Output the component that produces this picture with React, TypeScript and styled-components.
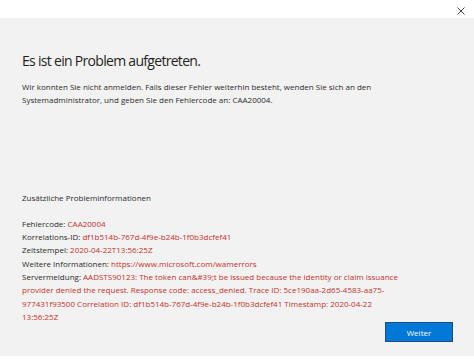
import React from 'react';
import styled, { createGlobalStyle } from 'styled-components';

const Global = createGlobalStyle`
  html, body {
    margin: 0;
    padding: 0;
    background: #ffffff;
  }
  body {
    font-family: 'Open Sans', 'Noto Sans', 'Liberation Sans', sans-serif;
    color: #2b2b2b;
  }
`;

const Window = styled.div`
  width: 474px;
  height: 361px;
  display: flex;
  flex-direction: column;
  background: #ffffff;
`;

const TitleBar = styled.div`
  height: 18px;
  display: flex;
  justify-content: flex-end;
  align-items: center;
  padding-right: 8px;
  background: #ffffff;
`;

const CloseButton = styled.button`
  border: none;
  background: transparent;
  padding: 0;
  width: 10px;
  height: 10px;
  display: flex;
  align-items: center;
  justify-content: center;
  margin-top: 4px;
`;

const Panel = styled.div`
  height: 338px;
  background: #f2f2f2;
  display: flex;
  flex-direction: column;
  padding: 0 21px 0 22px;
  box-sizing: border-box;
`;

const Heading = styled.h1`
  margin: 33px 0 0;
  font-size: 14px;
  letter-spacing: -0.7px;
  font-weight: 400;
  line-height: 20px;
  color: #1f1f1f;
`;

const Text = styled.p<{ top?: number }>`
  margin: ${(p) => p.top || 0}px 0 0;
  font-size: 8px;
  line-height: 13.3px;
  color: #2b2b2b;
  max-width: 382px;
`;

const Value = styled.span`
  color: #c4312b;
`;

const Footer = styled.div`
  margin-top: -1px;
  display: flex;
  justify-content: flex-end;
`;

const Button = styled.button`
  width: 68px;
  height: 20px;
  background: #0078d7;
  border: 1px solid #1a4f86;
  color: #ffffff;
  font-family: 'Open Sans', 'Noto Sans', sans-serif;
  font-size: 8px;
  padding: 0;
`;

const App = () => {
  return (
    <Window>
      <Global />
      <TitleBar>
        <CloseButton aria-label="Schließen">
          <svg width="8" height="8" viewBox="0 0 8 8">
            <path d="M0.5 0.5 L7.5 7.5 M7.5 0.5 L0.5 7.5" stroke="#444" strokeWidth="1" />
          </svg>
        </CloseButton>
      </TitleBar>
      <Panel>
        <Heading>Es ist ein Problem aufgetreten.</Heading>
        <Text top={9}>
          Wir konnten Sie nicht anmelden. Falls dieser Fehler weiterhin besteht, wenden Sie sich an den
          Systemadministrator, und geben Sie den Fehlercode an: CAA20004.
        </Text>
        <Text top={84}>Zusätzliche Probleminformationen</Text>
        <Text top={13}>
          Fehlercode: <Value>CAA20004</Value>
          <br />
          Korrelations-ID: <Value>df1b514b-767d-4f9e-b24b-1f0b3dcfef41</Value>
          <br />
          Zeitstempel: <Value>2020-04-22T13:56:25Z</Value>
          <br />
          Weitere Informationen: <Value>https://www.microsoft.com/wamerrors</Value>
          <br />
          Servermeldung:{' '}
          <Value>
            AADSTS90123: The token can&amp;#39;t be issued because the identity or claim issuance
            provider denied the request. Response code: access_denied. Trace ID: 5ce190aa-2d65-4583-aa75-977431f93500
            Correlation ID: df1b514b-767d-4f9e-b24b-1f0b3dcfef41 Timestamp: 2020-04-22 13:56:25Z
          </Value>
        </Text>
        <Footer>
          <Button>Weiter</Button>
        </Footer>
      </Panel>
    </Window>
  );
};

export default App;
